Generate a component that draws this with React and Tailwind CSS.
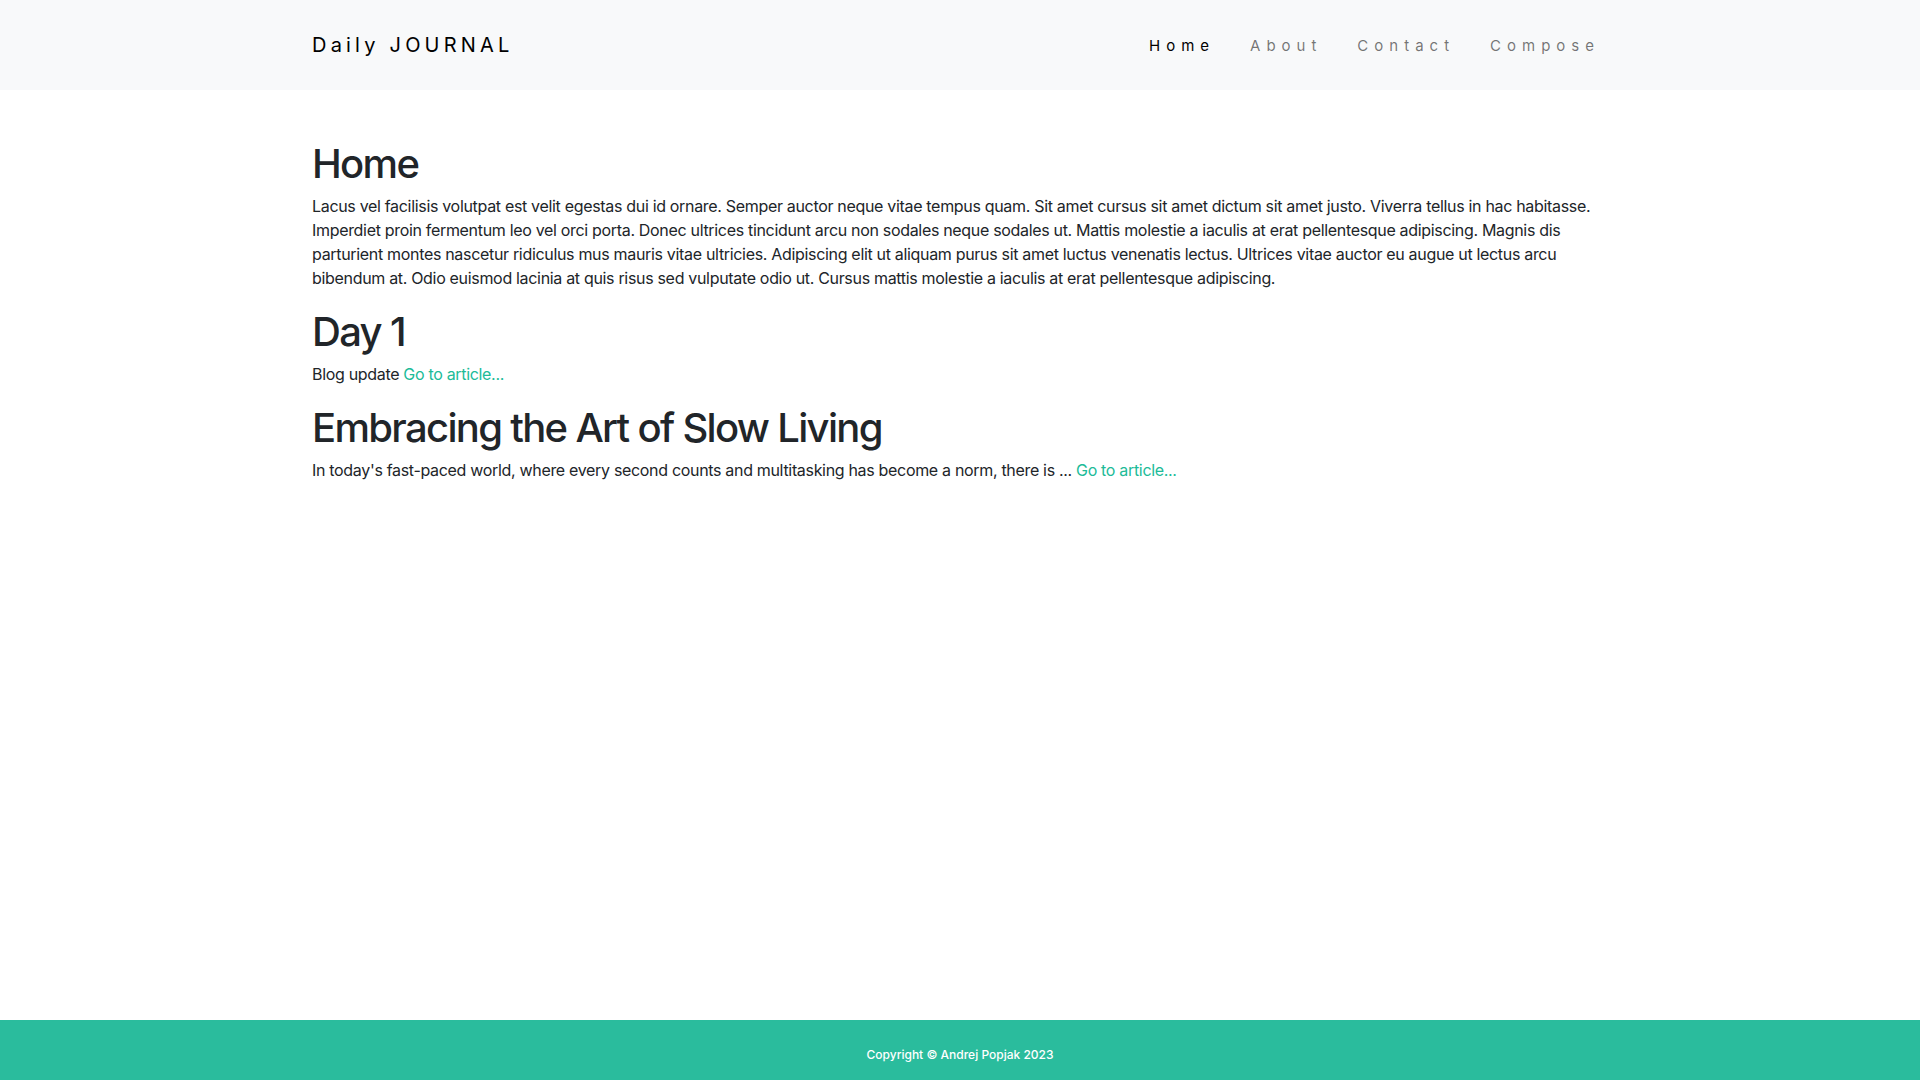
import React from "react";

export default function App() {
  const font = { fontFamily: 'Inter, "Noto Sans", sans-serif' };
  const h1 = "text-[40px] leading-[1.2] font-medium tracking-[-0.042em] pt-[2px] mb-[6px]";
  const p = "text-base leading-6 mb-4 tracking-[-0.02em]";
  return (
    <div className="min-h-screen flex flex-col bg-white text-[#212529]" style={font}>
      <nav className="bg-[#f8f9fa] h-[90px] flex items-center">
        <div className="w-[1320px] mx-auto px-3 flex items-center justify-between">
          <a className="text-[20px] tracking-[0.21em] text-black leading-none">Daily JOURNAL</a>
          <ul className="flex items-center gap-[19px]">
            <li><a className="px-2 text-[15px] tracking-[0.4em] text-black">Home</a></li>
            <li><a className="px-2 text-[15px] tracking-[0.4em] text-black/55">About</a></li>
            <li><a className="px-2 text-[15px] tracking-[0.4em] text-black/55">Contact</a></li>
            <li><a className="px-2 text-[15px] tracking-[0.4em] text-black/55">Compose</a></li>
          </ul>
        </div>
      </nav>
      <main className="w-[1320px] mx-auto px-3 mt-12">
        <h1 className={h1}>Home</h1>
        <p className={p}>
          Lacus vel facilisis volutpat est velit egestas dui id ornare. Semper auctor neque vitae tempus quam. Sit amet cursus sit amet dictum sit amet justo. Viverra tellus in hac habitasse. Imperdiet proin fermentum leo vel orci porta. Donec ultrices tincidunt arcu non sodales neque sodales ut. Mattis molestie a iaculis at erat pellentesque adipiscing. Magnis dis parturient montes nascetur ridiculus mus mauris vitae ultricies. Adipiscing elit ut aliquam purus sit amet luctus venenatis lectus. Ultrices vitae auctor eu augue ut lectus arcu bibendum at. Odio euismod lacinia at quis risus sed vulputate odio ut. Cursus mattis molestie a iaculis at erat pellentesque adipiscing.
        </p>
        <h1 className={h1}>Day 1</h1>
        <p className={p}>
          Blog update <a className="text-[#20bb98]">Go to article...</a>
        </p>
        <h1 className={h1}>Embracing the Art of Slow Living</h1>
        <p className={p}>
          In today's fast-paced world, where every second counts and multitasking has become a norm, there is ... <a className="text-[#20bb98]">Go to article...</a>
        </p>
      </main>
      <footer className="mt-auto h-[60px] pt-[10px] bg-[#2abc9d] flex items-center justify-center">
        <p className="text-white text-[12px] font-medium">Copyright © Andrej Popjak 2023</p>
      </footer>
    </div>
  );
}
